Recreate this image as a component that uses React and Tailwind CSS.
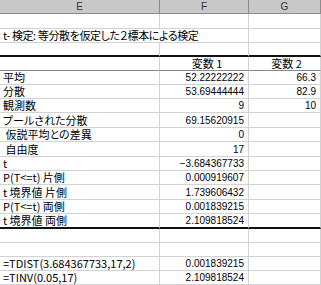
// App.jsx — Excel 風の t 検定結果シート (列 E / F / G)

const JP = {
  fontFamily: '"Noto Sans CJK JP", "Liberation Sans", sans-serif',
  fontFeatureSettings: '"palt"',
};

// h: 行の高さ(px, 下線込み)。bottom: 下線の種類
const ROWS = [
  { h: "h-[15px]" },
  { h: "h-[14px]", title: "t- 検定: 等分散を仮定した２標本による検定" },
  { h: "h-[14px]", bottom: "thick" },
  { h: "h-[14px]", f: "変数 1", g: "変数 2", head: true, bottom: "mid" },
  { h: "h-[14px]", e: "平均", f: "52.22222222", g: "66.3" },
  { h: "h-[14px]", e: "分散", f: "53.69444444", g: "82.9" },
  { h: "h-[14px]", e: "観測数", f: "9", g: "10" },
  { h: "h-[15px]", e: "プールされた分散", f: "69.15620915" },
  { h: "h-[14px]", e: " 仮説平均との差異", f: "0" },
  { h: "h-[15px]", e: " 自由度", f: "17" },
  { h: "h-[14px]", e: "t", f: "−3.684367733" },
  { h: "h-[14px]", e: "P(T<=t) 片側", f: "0.000919607" },
  { h: "h-[15px]", e: "t 境界値 片側", f: "1.739606432" },
  { h: "h-[14px]", e: "P(T<=t) 両側", f: "0.001839215" },
  { h: "h-[15px]", e: "t 境界値 両側", f: "2.109818524", bottom: "thick" },
  { h: "h-[14px]" },
  { h: "h-[14px]" },
  { h: "h-[14px]", e: "=TDIST(3.684367733,17,2)", f: "0.001839215" },
  { h: "h-[14px]", e: "=TINV(0.05,17)", f: "2.109818524" },
];

function bottomClass(bottom) {
  if (bottom === "thick") return "border-b-2 border-b-[#111]";
  if (bottom === "mid") return "border-b border-b-[#8a8a8a]";
  return "border-b border-b-[#d2d2d2]";
}

function Cell({ text, head }) {
  if (!text) return null;
  return head ? (
    <span className="whitespace-nowrap text-[11px] leading-[11px] text-black" style={JP}>
      {text}
    </span>
  ) : (
    <span className="whitespace-nowrap text-[10px] leading-[11px] text-black font-['Liberation_Sans',sans-serif]">
      {text}
    </span>
  );
}

function Row({ row }) {
  const b = bottomClass(row.bottom);
  return (
    <div className={`flex ${row.h}`}>
      <div
        className={`w-[160px] shrink-0 flex items-center pl-[3px] ${b} ${
          row.title ? "relative z-10" : "border-r border-r-[#d2d2d2]"
        }`}
      >
        {row.title ? (
          <span className="whitespace-nowrap text-[11px] leading-[11px] tracking-[-0.4px] text-black" style={JP}>
            {row.title}
          </span>
        ) : row.e ? (
          <span className="whitespace-pre text-[11px] leading-[11px] text-black" style={JP}>
            {row.e}
          </span>
        ) : null}
      </div>
      <div
        className={`w-[89px] shrink-0 flex items-center border-r border-r-[#d2d2d2] ${b} ${
          row.head ? "justify-center pl-[6px]" : "justify-end pr-[4px]"
        }`}
      >
        <Cell text={row.f} head={row.head} />
      </div>
      <div
        className={`w-[72px] shrink-0 flex items-center border-r border-r-[#d2d2d2] ${b} ${
          row.head ? "justify-center pl-[4px]" : "justify-end pr-[4px]"
        }`}
      >
        <Cell text={row.g} head={row.head} />
      </div>
    </div>
  );
}

export default function App() {
  return (
    <div className="w-[321px] h-[285px] bg-white overflow-hidden">
      {/* 列見出し */}
      <div className="flex h-[14px] bg-[#c8c8c8] border-b border-b-[#8c8c8c] text-[10px] leading-none text-[#333] font-['Liberation_Sans',sans-serif]">
        <div className="w-[160px] flex items-center justify-center border-r border-r-[#8c8c8c]">E</div>
        <div className="w-[89px] flex items-center justify-center border-r border-r-[#8c8c8c]">F</div>
        <div className="w-[72px] flex items-center justify-center border-r border-r-[#8c8c8c]">G</div>
      </div>
      {ROWS.map((row, i) => (
        <Row key={i} row={row} />
      ))}
    </div>
  );
}
